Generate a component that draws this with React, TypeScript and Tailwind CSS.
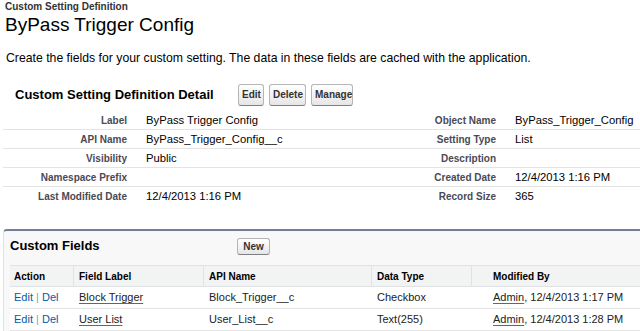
import React from 'react';

interface DetailRow {
  label: string;
  value: string;
  label2: string;
  value2: string;
}

interface CustomField {
  label: string;
  apiName: string;
  dataType: string;
  modified: string;
}

const detailRows: DetailRow[] = [
  { label: 'Label', value: 'ByPass Trigger Config', label2: 'Object Name', value2: 'ByPass_Trigger_Config' },
  { label: 'API Name', value: 'ByPass_Trigger_Config__c', label2: 'Setting Type', value2: 'List' },
  { label: 'Visibility', value: 'Public', label2: 'Description', value2: '' },
  { label: 'Namespace Prefix', value: '', label2: 'Created Date', value2: '12/4/2013 1:16 PM' },
  { label: 'Last Modified Date', value: '12/4/2013 1:16 PM', label2: 'Record Size', value2: '365' },
];

const fields: CustomField[] = [
  { label: 'Block Trigger', apiName: 'Block_Trigger__c', dataType: 'Checkbox', modified: '12/4/2013 1:17 PM' },
  { label: 'User List', apiName: 'User_List__c', dataType: 'Text(255)', modified: '12/4/2013 1:28 PM' },
];

function Btn({ children, className = '' }: { children: React.ReactNode; className?: string }) {
  return (
    <button
      className={`px-[3px] rounded-[3px] border border-[#b5b5b5] border-b-[#7f7f7f] bg-gradient-to-b from-white to-[#e6e6e6] text-[10px] font-bold text-[#333] leading-none ${className}`}
    >
      {children}
    </button>
  );
}

export default function App() {
  return (
    <div className="w-[640px] h-[331px] overflow-hidden bg-white font-['Liberation_Sans',Arial,sans-serif] text-black">
      {/* Page header */}
      <div className="pl-[5px]">
        <div className="text-[10px] font-bold leading-[12px] pt-[1px] text-[#333]">Custom Setting Definition</div>
        <h1 className="text-[19px] leading-[23px] text-black">ByPass Trigger Config</h1>
        <p className="text-[12.25px] leading-[14px] mt-[15px] pl-[1px]">
          Create the fields for your custom setting. The data in these fields are cached with the application.
        </p>
      </div>

      {/* Detail block */}
      <div className="pl-[3px] mt-[19px]">
        <div className="flex items-center h-[22px]">
          <h2 className="w-[235px] pl-[12px] text-[13px] font-bold">Custom Setting Definition Detail</h2>
          <div className="flex gap-[5px]">
            <Btn className="h-[22px] w-[26px]">Edit</Btn>
            <Btn className="h-[22px] w-[37px]">Delete</Btn>
            <Btn className="h-[22px] w-[42px]">Manage</Btn>
          </div>
        </div>
        <div className="mt-[5px]">
          {detailRows.map((r, i) => (
            <div
              key={r.label}
              className={`grid grid-cols-[134px_236px_133px_1fr] h-[19px] items-center ${
                i < detailRows.length - 1 ? 'border-b border-[#e3e3e3]' : ''
              }`}
            >
              <div className="text-right pr-[10px] text-[10px] font-bold text-[#4a4a56]">{r.label}</div>
              <div className="pl-[9px] text-[11.25px]">{r.value}</div>
              <div className="text-right pr-[10px] text-[10px] font-bold text-[#4a4a56]">{r.label2}</div>
              <div className="pl-[9px] text-[11.25px]">{r.value2}</div>
            </div>
          ))}
        </div>
      </div>

      {/* Custom Fields related list */}
      <div className="ml-[3px] mt-[23px] w-[700px] bg-[#f8f8f8] border-t-[2px] border-t-[#747e96] border-l border-l-[#e0e0e0] rounded-tl-[4px]">
        <div className="flex items-start h-[34px] pt-[7px]">
          <h3 className="w-[233px] pl-[6px] text-[13px] leading-[16px] font-bold">Custom Fields</h3>
          <Btn className="h-[17px] w-[33px]">New</Btn>
        </div>
        <div className="ml-[6px] bg-white">
          <div className="grid grid-cols-[64px_130px_168px_100px_17px_1fr] h-[22px] items-center bg-[#f2f3f3] border-y border-[#e0e3e5] text-[10px] font-bold text-black">
            <div className="pl-[4px] h-full flex items-center border-r border-[#e0e3e5]">Action</div>
            <div className="pl-[5px] h-full flex items-center border-r border-[#e0e3e5]">Field Label</div>
            <div className="pl-[5px] h-full flex items-center border-r border-[#e0e3e5]">API Name</div>
            <div className="pl-[5px] h-full flex items-center border-r border-[#e0e3e5]">Data Type</div>
            <div></div>
            <div className="pl-[4px]">Modified By</div>
          </div>
          {fields.map((f) => (
            <div
              key={f.label}
              className="grid grid-cols-[64px_130px_168px_100px_17px_1fr] h-[22px] items-center border-b border-[#e3e3e3] text-[11px] text-[#222]"
            >
              <div className="pl-[4px] text-[#015ba7]">
                Edit <span className="text-[#999]">|</span> Del
              </div>
              <div className="pl-[5px]">
                <span className="underline decoration-[#666] underline-offset-[2px]">{f.label}</span>
              </div>
              <div className="pl-[5px]">{f.apiName}</div>
              <div className="pl-[5px]">{f.dataType}</div>
              <div></div>
              <div className="pl-[4px]">
                <span className="underline decoration-[#666] underline-offset-[2px]">Admin</span>, {f.modified}
              </div>
            </div>
          ))}
        </div>
      </div>
    </div>
  );
}
